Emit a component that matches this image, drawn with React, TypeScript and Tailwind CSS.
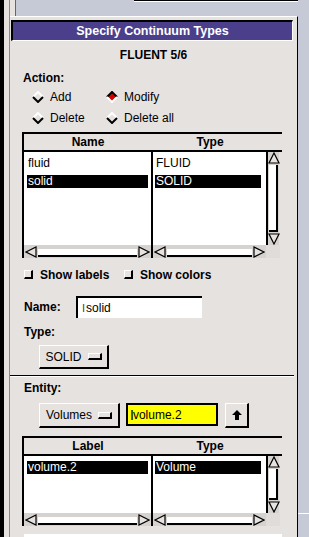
import React from "react";

const font = "font-['Liberation_Sans',Arial,sans-serif]";

function Diamond({ on }: { on?: boolean }) {
  return (
    <svg width="12" height="12" viewBox="0 0 12 12" className="shrink-0">
      <polygon points="6,1 11,6 6,11 1,6" fill={on ? "#d40000" : "#e6e2e0"} />
      <polyline points="1,6 6,1 11,6" fill="none" stroke={on ? "#000" : "#fff"} strokeWidth="2" />
      <polyline points="1,6 6,11 11,6" fill="none" stroke={on ? "#fff" : "#000"} strokeWidth="2" />
    </svg>
  );
}

function Check() {
  return <span className="inline-block w-[9px] h-[9px] bg-[#e6e2e0] border-t border-l border-white border-r-2 border-b-2 border-r-black border-b-black shrink-0" />;
}

function OptInd() {
  return <span className="inline-block w-[14px] h-[7px] bg-[#e6e2e0] border-t border-l border-white border-r-2 border-b-2 border-r-black border-b-black" />;
}

function Arrow({ dir }: { dir: "l" | "r" | "u" | "d" }) {
  const pts: Record<string, string> = {
    l: "1,6 11,1 11,11",
    r: "11,6 1,1 1,11",
    u: "6,1 1,11 11,11",
    d: "6,11 1,1 11,1",
  };
  return (
    <svg width="12" height="12" viewBox="0 0 12 12" className="shrink-0">
      <polygon points={pts[dir]} fill="#e6e2e0" stroke="#000" strokeWidth="1.2" />
    </svg>
  );
}

function HScroll() {
  return (
    <div className="flex-1 h-[13px] bg-[#d6d2d0] flex items-center px-[1px]">
      <Arrow dir="l" />
      <div className="flex-1 h-[8px] mt-[2px] bg-white border-b-2 border-black mx-[1px]" />
      <Arrow dir="r" />
    </div>
  );
}

function ListBox({ heads, rows, bodyH }: { heads: [string, string]; rows: [string, string, boolean][]; bodyH: string }) {
  return (
    <div className="ml-[12px] w-[260px] border-t-2 border-l-2 border-black">
      <div className="h-[18px] flex font-bold text-[12px] text-black border-b-2 border-black">
        <div className="w-[128px] text-center leading-[16px]">{heads[0]}</div>
        <div className="w-[116px] text-center leading-[16px]">{heads[1]}</div>
        <div className="flex-1" />
      </div>
      <div className={`flex ${bodyH}`}>
        <div className="w-[127px] bg-white pt-[5px] pl-[3px] pr-[3px] text-[12px]">
          {rows.map((r, i) => (
            <div key={i} className={`h-[13px] leading-[13px] px-[1px] ${r[2] ? "bg-black text-white" : "text-black"} mb-[5px]`}>{r[0]}</div>
          ))}
        </div>
        <div className="w-[2px] bg-black" />
        <div className="w-[113px] bg-white pt-[5px] pl-[2px] pr-[5px] text-[12px]">
          {rows.map((r, i) => (
            <div key={i} className={`h-[13px] leading-[13px] px-[1px] ${r[2] ? "bg-black text-white" : "text-black"} mb-[5px]`}>{r[1]}</div>
          ))}
        </div>
        <div className="w-[13px] bg-[#d6d2d0] border-l-2 border-black flex flex-col items-center">
          <Arrow dir="u" />
          <div className="flex-1 w-[9px] bg-white border-r-2 border-b-2 border-black my-[1px]" />
          <Arrow dir="d" />
        </div>
      </div>
      <div className="flex bg-[#e6e2e0]">
        <div className="w-[127px] flex"><HScroll /></div>
        <div className="w-[2px] bg-black" />
        <div className="w-[113px] flex"><HScroll /></div>
        <div className="w-[14px] h-[13px] bg-[#e0dcda]" />
      </div>
    </div>
  );
}

export default function App() {
  return (
    <div className={`w-[309px] h-[537px] bg-[#c6cad6] flex overflow-hidden ${font}`}>
      <div className="w-[4px] bg-black" />
      <div className="w-[6px] bg-[#e6e2e0] border-r border-[#8a8a8a]" />
      <div className="flex flex-col w-[288px]">
        {/* top strip */}
        <div className="h-[16px] shrink-0 flex">
          <div className="w-[6px] bg-[#e6e2e0] border-r border-[#666]" />
          <div className="flex-1 flex flex-col">
            <div className="h-[2px] ml-[118px] bg-white border-t border-black" />
          </div>
        </div>
        {/* panel */}
        <div className="flex-1 overflow-hidden bg-[#e6e2e0] border-t border-white border-r border-r-black pt-[3px]">
          <div className="ml-[1px] mr-[4px] h-[21px] bg-[#4b3f8c] border-t-2 border-l-2 border-black border-b border-r border-b-white border-r-white text-white font-bold text-[12.5px] text-center leading-[18px]">
            Specify Continuum Types
          </div>
          <div className="h-[28px] flex items-center justify-center font-bold text-[12px] text-black">FLUENT 5/6</div>
          <div className="h-[18px] flex items-center pl-[13px] font-bold text-[12px] text-black">Action:</div>
          <div className="h-[20px] flex items-center pl-[22px] text-[12px] text-black">
            <div className="w-[74px] flex items-center gap-[6px]"><Diamond /><span>Add</span></div>
            <div className="flex items-center gap-[6px]"><Diamond on /><span>Modify</span></div>
          </div>
          <div className="h-[22px] flex items-center pl-[22px] text-[12px] text-black">
            <div className="w-[74px] flex items-center gap-[6px]"><Diamond /><span>Delete</span></div>
            <div className="flex items-center gap-[6px]"><Diamond /><span>Delete all</span></div>
          </div>
          <div className="mt-[3px]">
            <ListBox heads={["Name", "Type"]} rows={[["fluid", "FLUID", false], ["solid", "SOLID", true]]} bodyH="h-[93px]" />
          </div>
          <div className="h-[33px] flex items-center pl-[14px] font-bold text-[12px] text-black">
            <div className="w-[100px] flex items-center gap-[7px]"><Check /><span>Show labels</span></div>
            <div className="flex items-center gap-[7px]"><Check /><span>Show colors</span></div>
          </div>
          <div className="h-[32px] flex items-center pl-[14px]">
            <span className="w-[52px] font-bold text-[12px] text-black">Name:</span>
            <div className="w-[126px] h-[22px] bg-white border-t-2 border-l-2 border-black flex items-center pl-[4px] text-[12px] text-black">
              <span className="text-[#444] text-[11px] mr-[1px] leading-none">I</span>solid
            </div>
          </div>
          <div className="h-[17px] flex items-center pl-[14px] font-bold text-[12px] text-black">Type:</div>
          <div className="mt-[5px] ml-[29px] w-[70px] h-[24px] border-t border-l border-white border-r-2 border-b-2 border-r-black border-b-black flex items-center justify-center gap-[6px] text-[12px] text-black">
            <span>SOLID</span><OptInd />
          </div>
          <div className="mt-[6px] mr-[3px] border-t border-black border-b border-b-white" />
          <div className="h-[22px] flex items-center pl-[14px] font-bold text-[12px] text-black">Entity:</div>
          <div className="mt-[4px] h-[25px] flex items-start pl-[29px]">
            <div className="w-[81px] h-[25px] border-t border-l border-white border-r-2 border-b-2 border-r-black border-b-black flex items-center justify-center gap-[6px] text-[12px] text-black">
              <span>Volumes</span><OptInd />
            </div>
            <div className="ml-[6px] w-[92px] h-[23px] bg-[#ffff00] border-2 border-black flex items-center pl-[2px] text-[12px] text-black">
              <span className="text-[14px] leading-none mr-[-1px]">I</span>volume.2
            </div>
            <div className="ml-[7px] w-[24px] h-[25px] border-t border-l border-white border-r-2 border-b-2 border-r-black border-b-black flex items-center justify-center">
              <svg width="12" height="12" viewBox="0 0 12 12"><polygon points="6,1 11,6 8,6 8,11 4,11 4,6 1,6" fill="#000" /></svg>
            </div>
          </div>
          <div className="mt-[8px]">
            <ListBox heads={["Label", "Type"]} rows={[["volume.2", "Volume", true]]} bodyH="h-[57px]" />
          </div>
          <div className="mt-[8px] ml-[14px] w-[258px] h-[4px] bg-white" />
        </div>
      </div>
      <div className="flex-1 flex flex-col">
        <div className="h-[513px] shrink-0" />
        <div className="h-[1px] bg-white" />
      </div>
    </div>
  );
}
